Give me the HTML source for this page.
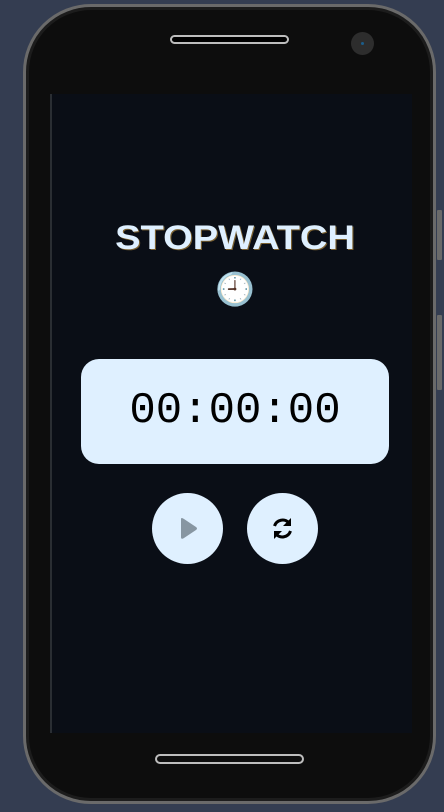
<!DOCTYPE html>
<html><head><meta charset="utf-8"><style>
html,body{margin:0;padding:0;}
body{width:444px;height:812px;background:#343d51;position:relative;overflow:hidden;font-family:"Liberation Sans","DejaVu Sans",sans-serif;}
.phone{position:absolute;left:23px;top:4px;width:413px;height:800px;border-radius:68px;background:#0d0d0d;border:3px solid #6a6a6a;box-sizing:border-box;box-shadow:inset 0 0 0 3px #1c1c1c;}
.btn1{position:absolute;left:437px;top:210px;width:5px;height:50px;background:#6a6a6a;border-radius:1px;}
.btn2{position:absolute;left:437px;top:315px;width:5px;height:75px;background:#6a6a6a;border-radius:1px;}
.spk{position:absolute;left:170px;top:35px;width:119px;height:9px;border:2px solid #bdbdbd;border-radius:6px;background:#000;box-sizing:border-box;}
.cam{position:absolute;left:351px;top:32px;width:23px;height:23px;border-radius:50%;background:#2d2d2d;}
.cam:after{content:"";position:absolute;left:10px;top:10px;width:3px;height:3px;border-radius:50%;background:#1b5d8a;}
.screen{position:absolute;left:50px;top:94px;width:362px;height:639px;background:#0a0e16;border-left:2px solid #2a2e33;box-sizing:border-box;}
.home{position:absolute;left:155px;top:754px;width:149px;height:10px;border:2px solid #bdbdbd;border-radius:6px;box-sizing:border-box;}
h1{position:absolute;left:35px;width:400px;top:219px;margin:0;text-align:center;font-size:34px;font-weight:bold;color:#dff0ff;transform:scaleX(1.12);transform-origin:200px 0;text-shadow:1px 1px 0 #7a6030;}
.emoji{position:absolute;left:35px;width:400px;top:270px;text-align:center;font-size:32px;line-height:38px;font-family:"Noto Color Emoji","DejaVu Sans",sans-serif;}
.timer{position:absolute;left:81px;top:359px;width:308px;height:105px;border-radius:18px;background:#dff0ff;text-align:center;line-height:105px;font-family:"Liberation Mono",monospace;font-size:44px;color:#000;}
.c{position:absolute;top:493px;width:71px;height:71px;border-radius:50%;background:#dff0ff;}
</style></head><body>
<div class="btn1"></div><div class="btn2"></div>
<div class="phone"></div>
<div class="spk"></div><div class="cam"></div>
<div class="screen"></div>
<div class="home"></div>
<h1>STOPWATCH</h1>
<div class="emoji">🕘</div>
<div class="timer">00:00:00</div>
<div class="c" style="left:152px"><svg width="71" height="71" viewBox="0 0 71 71"><path d="M29 26 L29 44 Q29 47 32 45 L44 37 Q46 35.5 44 34 L32 26 Q29 24 29 26Z" fill="#8796a2"/></svg></div>
<div class="c" style="left:247px"><svg width="71" height="71" viewBox="0 0 71 71"><g fill="none" stroke="#000" stroke-width="3"><path d="M27.5 33 A8.5 8.5 0 0 1 42 30"/><path d="M43.5 38 A8.5 8.5 0 0 1 29 41"/></g><path d="M44 25 L44 33 L36 33Z" fill="#000"/><path d="M27 46 L27 38 L35 38Z" fill="#000"/></svg></div>
</body></html>
